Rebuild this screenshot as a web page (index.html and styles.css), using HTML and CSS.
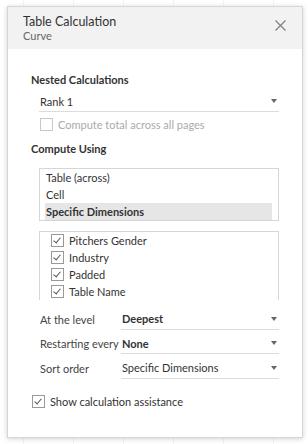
FILE: index.html
```html
<!DOCTYPE html>
<html lang="en">
<head>
    <meta charset="UTF-8">
    <title>Table Calculation</title>
    <link rel="stylesheet" href="styles.css">
</head>
<body>
    <div class="dialog">
        <div class="dialog-header">
            <div>
                <div class="title">Table Calculation</div>
                <div class="subtitle">Curve</div>
            </div>
            <svg class="close" width="11" height="11" viewBox="0 0 11 11">
                <path d="M0.5 0.5 L10.5 10.5 M10.5 0.5 L0.5 10.5" stroke="#808080" stroke-width="1.2" fill="none"/>
            </svg>
        </div>

        <div class="dialog-body">
            <h2>Nested Calculations</h2>
            <div class="select nested">
                <span>Rank 1</span>
                <span class="caret"></span>
            </div>
            <label class="check disabled">
                <span class="box"></span>
                Compute total across all pages
            </label>

            <h2 class="compute">Compute Using</h2>
            <div class="listbox">
                <div class="option">Table (across)</div>
                <div class="option">Cell</div>
                <div class="option selected">Specific Dimensions</div>
            </div>

            <div class="checklist">
                <label class="check"><span class="box checked"></span>Pitchers Gender</label>
                <label class="check"><span class="box checked"></span>Industry</label>
                <label class="check"><span class="box checked"></span>Padded</label>
                <label class="check"><span class="box checked"></span>Table Name</label>
            </div>

            <div class="fields">
                <div class="field">
                    <span class="field-label">At the level</span>
                    <div class="select"><span class="strong">Deepest</span><span class="caret"></span></div>
                </div>
                <div class="field">
                    <span class="field-label">Restarting every</span>
                    <div class="select"><span class="strong">None</span><span class="caret"></span></div>
                </div>
                <div class="field">
                    <span class="field-label">Sort order</span>
                    <div class="select"><span>Specific Dimensions</span><span class="caret"></span></div>
                </div>
            </div>

            <label class="check assist"><span class="box checked"></span>Show calculation assistance</label>
        </div>
    </div>
</body>
</html>
```

FILE: styles.css
```css
body {
    margin: 0;
    font-family: Lato, 'Liberation Sans', sans-serif;
    color: #333;
    background-color: #fff;
    background-image:
        linear-gradient(to right, #f3f3f3 1px, transparent 1px);
    background-size: 50px 100%;
    background-position: 23px 0;
    height: 444px;
    overflow: hidden;
}
.dialog {
    margin: 6px 0 0 7px;
    width: 294px;
    height: 430px;
    background: #fff;
    border: 1px solid #d6d6d6;
    box-shadow: 0 1px 5px rgba(0, 0, 0, 0.18);
}
.dialog-header {
    display: flex;
    justify-content: space-between;
    align-items: flex-start;
    height: 42px;
    padding: 7px 16px 0 15px;
    box-sizing: border-box;
    background-color: #f2f2f2;
}
.title {
    font-size: 12.5px;
    line-height: 15px;
    color: #333;
}
.subtitle {
    font-size: 11px;
    line-height: 14px;
    color: #666;
}
.close {
    margin-top: 6px;
}
.dialog-body {
    padding: 24px 23px 0 23px;
}
h2 {
    margin: 0;
    font-size: 11px;
    font-weight: 700;
    line-height: 14px;
    color: #333;
}
h2.compute {
    margin-top: 9px;
}
.select {
    flex: 1;
    display: flex;
    justify-content: space-between;
    align-items: center;
    height: 20px;
    border-bottom: 1px solid #dcdcdc;
    font-size: 11px;
    color: #333;
    padding-left: 1px;
}
.select.nested {
    margin: 4px 0 0 8px;
}
.strong {
    font-weight: 700;
}
.caret {
    width: 0;
    height: 0;
    border-left: 3px solid transparent;
    border-right: 3px solid transparent;
    border-top: 4px solid #666;
    margin-right: 2px;
}
.check {
    display: flex;
    align-items: center;
    gap: 5px;
    font-size: 11px;
    color: #333;
    height: 17px;
}
.check.disabled {
    color: #aaa;
    margin: 4px 0 0 9px;
}
.box {
    width: 11px;
    height: 11px;
    border: 1px solid #999;
    background: #fff;
    position: relative;
    flex: none;
}
.check.disabled .box {
    border-color: #c8c8c8;
}
.box.checked::after {
    content: "";
    position: absolute;
    left: 3px;
    top: 1px;
    width: 3px;
    height: 6px;
    border-right: 1.2px solid #555;
    border-bottom: 1.2px solid #555;
    transform: rotate(40deg);
}
.listbox {
    margin: 12px 0 0 8px;
    height: 51px;
    border: 1px solid #d6d6d6;
    padding: 0 6px 0 5px;
}
.option {
    font-size: 11px;
    line-height: 17px;
    padding-left: 1px;
}
.option.selected {
    background-color: #e6e6e6;
    font-weight: 700;
}
.checklist {
    margin: 10px 0 0 8px;
    height: 68px;
    border: 1px solid #d6d6d6;
    border-bottom: none;
    padding: 0 0 0 11px;
}
.fields {
    margin: 7px 0 0 9px;
}
.field {
    display: flex;
    align-items: center;
    height: 24.5px;
}
.field-label {
    width: 81px;
    white-space: nowrap;
    font-size: 11px;
    color: #444;
}
.check.assist {
    margin: 12px 0 0 1px;
}
```
